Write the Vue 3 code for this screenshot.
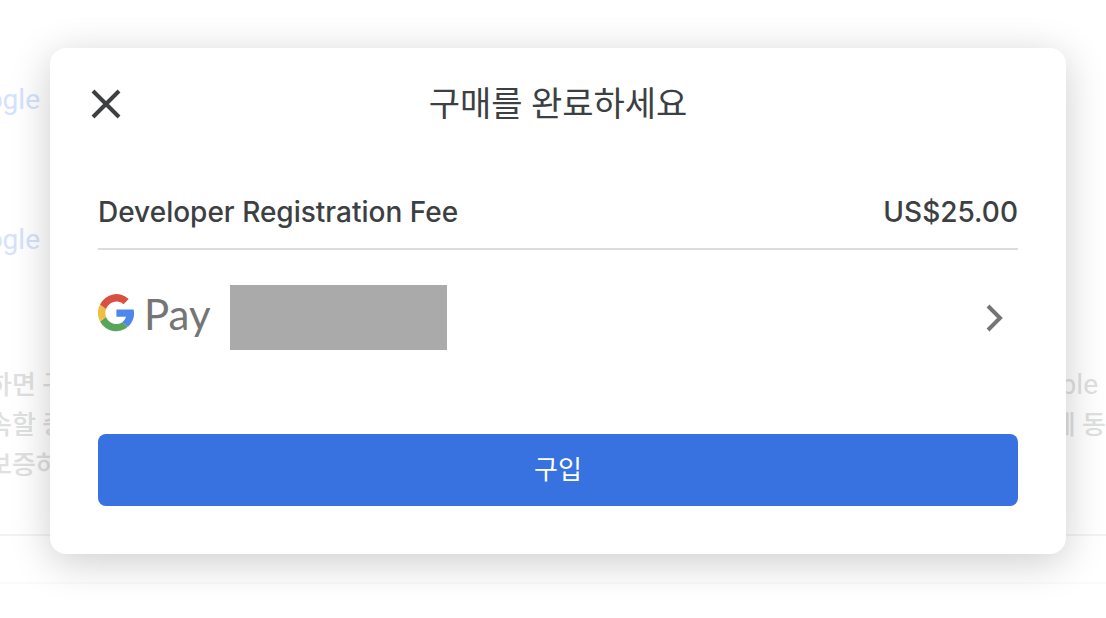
<script setup>
const links = ['Google', 'Google']
const terms = [
  { start: '하면 구', end: 'able' },
  { start: '속할 중', end: '에 동' },
  { start: '보증하', end: '' },
]
const item = { name: 'Developer Registration Fee', price: 'US$25.00' }
</script>

<template>
  <div class="page">
    <main class="backdrop" aria-hidden="true">
      <div v-for="(link, i) in links" :key="i" class="link-row">
        <a href="#" tabindex="-1">{{ link }}</a>
      </div>
      <div class="terms">
        <p v-for="term in terms" :key="term.start">
          <span>{{ term.start }}</span>
          <span class="term-end">{{ term.end }}</span>
        </p>
      </div>
      <div class="page-footer"></div>
    </main>

    <div class="overlay">
      <section class="dialog" role="dialog" aria-modal="true" aria-labelledby="title">
        <header>
          <button class="close" type="button" aria-label="닫기">
            <svg width="32" height="32" viewBox="0 0 32 32" aria-hidden="true">
              <path d="M3 3 29 29M29 3 3 29" fill="none" stroke="#3c4043" stroke-width="4" />
            </svg>
          </button>
          <h1 id="title">구매를 완료하세요</h1>
        </header>

        <div class="item">
          <span>{{ item.name }}</span>
          <span>{{ item.price }}</span>
        </div>

        <button class="method" type="button">
          <svg class="g-logo" width="36" height="38" viewBox="0 0 36 38" aria-hidden="true">
            <path d="M18.4 15.6H35.6A18 18 0 0 1 30 32.7L24.2 28.2A11 11 0 0 0 28.1 22.7H18.4Z" fill="#4f86ec" />
            <path d="M30 32.7A18.4 18.9 0 0 1 2 27.5L8 22.9A11 11.5 0 0 0 24.2 28.2Z" fill="#58a55c" />
            <path d="M2 27.5A19 19 0 0 1 2 10.5L8 15.1A12 12 0 0 0 8 22.9Z" fill="#f1bd42" />
            <path d="M2 10.5A18.4 19 0 0 1 30.7 5L25.5 10.2A11 11 0 0 0 8 15.1Z" fill="#d85140" />
          </svg>
          <span class="pay">Pay</span>
          <span class="account"></span>
          <svg class="chevron" width="18" height="28" viewBox="0 0 18 28" aria-hidden="true">
            <path d="M2 2 14 14 2 26" fill="none" stroke="#757575" stroke-width="4" />
          </svg>
        </button>

        <button class="buy" type="button">구입</button>
      </section>
    </div>
  </div>
</template>

<style>
body {
  margin: 0;
  background: #fff;
}
</style>

<style scoped>
.page {
  position: relative;
  min-height: 100vh;
  overflow: hidden;
  font-family: Roboto, "Noto Sans CJK KR", sans-serif;
  color: #3c4043;
}
.page * {
  box-sizing: border-box;
}
.backdrop {
  padding-top: 80px;
}
.link-row {
  display: flex;
  justify-content: flex-end;
  width: 40px;
  height: 140px;
  font-size: 28px;
  line-height: 40px;
}
.link-row a {
  color: #d4e2fc;
  text-decoration: none;
}
.terms {
  margin: 5px 0 0 -12px;
  padding-bottom: 49px;
  border-bottom: 2px solid #f3f3f3;
  font-size: 26px;
  font-weight: 500;
  line-height: 40px;
  color: #dfe0e0;
}
.terms p {
  display: flex;
  justify-content: space-between;
  margin: 0;
}
.terms .term-end {
  padding-right: 8px;
}
.terms p:nth-child(1) .term-end {
  font-size: 28px;
  font-weight: 400;
}
.terms p:nth-child(2) .term-end {
  padding-right: 0;
}
.page-footer {
  height: 48px;
  border-bottom: 2px solid #fafafa;
}
.overlay {
  position: absolute;
  inset: 0;
  padding: 48px 40px 64px 50px;
}
.dialog {
  padding: 32px 48px 48px;
  border-radius: 16px;
  background: #fff;
  box-shadow: 0 8px 40px rgba(0, 0, 0, 0.2);
}
header {
  display: grid;
  grid-template-columns: 32px 1fr 32px;
  align-items: center;
  height: 48px;
  margin: 0 -8px;
}
button {
  padding: 0;
  border: 0;
  background: none;
  font: inherit;
  color: inherit;
  cursor: pointer;
}
.close {
  display: flex;
}
h1 {
  margin: 0;
  font-size: 34px;
  font-weight: 400;
  line-height: 48px;
  text-align: center;
}
.item {
  display: flex;
  justify-content: space-between;
  margin-top: 64px;
  padding-bottom: 16px;
  border-bottom: 2px solid #dadce0;
  font-family: Inter, sans-serif;
  font-size: 28px;
  font-weight: 500;
  line-height: 40px;
}
.method {
  display: flex;
  align-items: center;
  width: 100%;
  margin-top: 35px;
  text-align: left;
}
.g-logo {
  margin-bottom: 9px;
}
.pay {
  width: 66px;
  margin-left: 10px;
  padding-bottom: 8px;
  font-family: Lato, sans-serif;
  font-size: 42px;
  line-height: 56px;
  color: #757575;
}
.account {
  width: 217px;
  height: 65px;
  margin-left: 20px;
  background: #aaa;
}
.chevron {
  margin: 0 14px 0 auto;
}
.buy {
  display: block;
  width: 100%;
  height: 72px;
  margin-top: 84px;
  padding-bottom: 6px;
  border-radius: 8px;
  background: #3871e0;
  font-size: 26px;
  color: #fff;
}
</style>
